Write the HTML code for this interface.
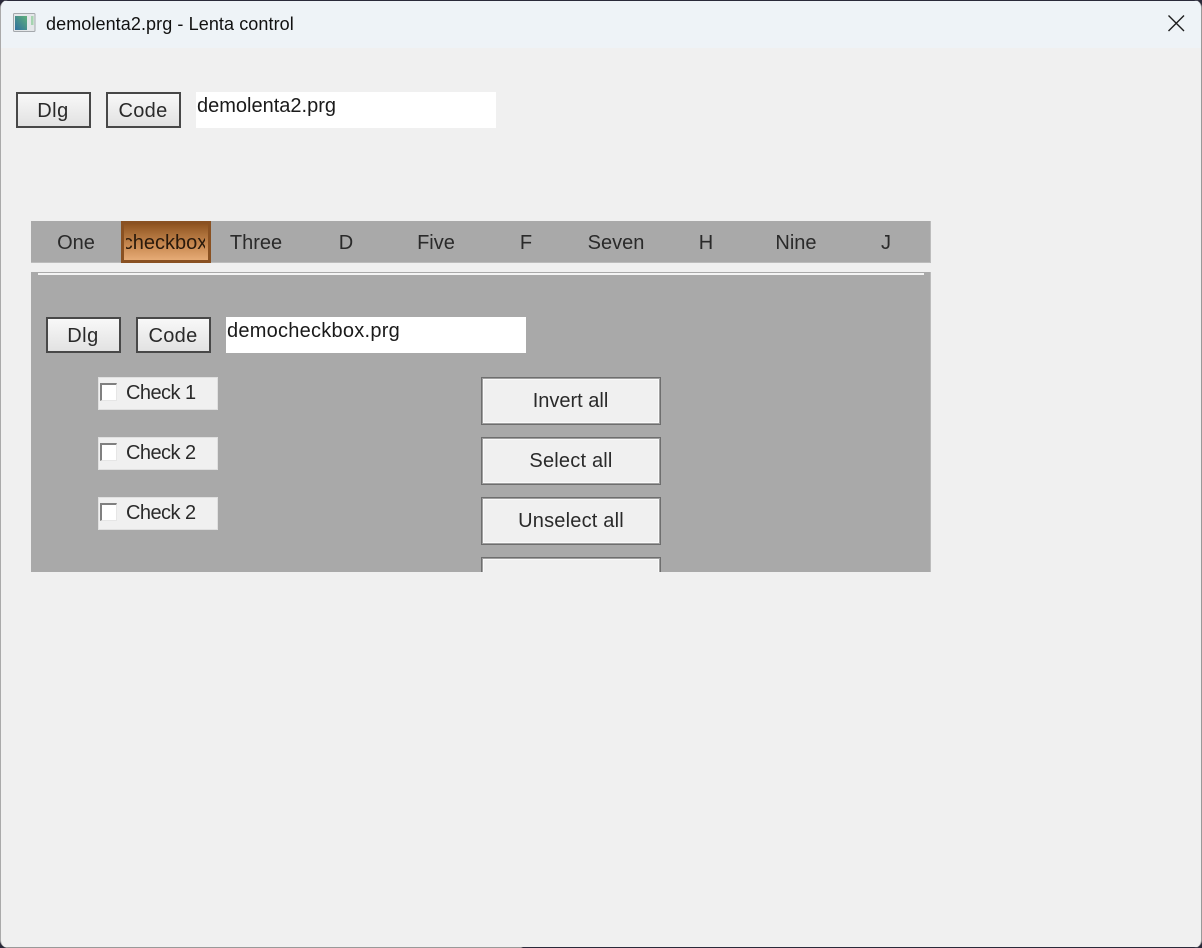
<!DOCTYPE html>
<html>
<head>
<meta charset="utf-8">
<title>demolenta2.prg - Lenta control</title>
<style>
html,body{margin:0;padding:0;width:1202px;height:948px;overflow:hidden;background:#2a2a3a;}
*{box-sizing:border-box;}
#win{position:absolute;left:0;top:0;width:1202px;height:948px;background:#f0f0f0;border-radius:8px;overflow:hidden;border-left:1px solid #aaa;border-right:1px solid #999;}
.a{position:absolute;white-space:nowrap;font-family:"Liberation Sans",sans-serif;font-size:20px;color:#1a1a1a;}
#bar{position:absolute;left:0;top:0;width:1202px;height:48px;background:#eef3f7;border-top:1px solid #2a2a3a;}
#bottom{position:absolute;left:0;top:947px;width:1202px;height:1px;background:linear-gradient(90deg,#999 0,#999 520px,#2a2a3a 522px,#2a2a3a 100%);}
.btn{position:absolute;border:2px solid #484848;background:linear-gradient(#f8f8f8,#e2e2e2);text-align:center;font-family:"Liberation Sans",sans-serif;font-size:20px;color:#2a2a2a;line-height:34px;}
.edit{position:absolute;background:#fff;font-family:"Liberation Sans",sans-serif;font-size:20px;color:#1a1a1a;line-height:28px;padding-left:1px;white-space:nowrap;}
.tab{position:absolute;top:221px;height:42px;width:90px;text-align:center;font-family:"Liberation Sans",sans-serif;font-size:20px;color:#2a2a2a;line-height:44px;}
.chk{position:absolute;left:97px;width:120px;height:33px;background:#f0f0f0;border:1px solid #e0e0e0;}
.box{position:absolute;left:1px;top:5px;width:17px;height:18px;background:#fff;border-top:2px solid #808080;border-left:2px solid #808080;border-right:1px solid #e6e6e6;border-bottom:1px solid #e6e6e6;}
.lbl{position:absolute;left:27px;top:3px;font-family:"Liberation Sans",sans-serif;font-size:20px;color:#2a2a2a;line-height:24px;white-space:nowrap;letter-spacing:-0.55px;}
.big{position:absolute;left:480px;width:180px;height:48px;background:#f0f0f0;border:1px solid #6e6e6e;box-shadow:inset 0 0 0 1px #a0a0a0,inset 0 0 0 2px #fafafa;text-align:center;font-family:"Liberation Sans",sans-serif;font-size:20px;color:#2a2a2a;line-height:46px;}
</style>
</head>
<body>
<div id="win">
  <div id="bar"></div>
  <svg style="position:absolute;left:12px;top:13px" width="23" height="20" viewBox="0 0 23 20">
    <defs><linearGradient id="g" x1="0" y1="1" x2="1" y2="0"><stop offset="0" stop-color="#2f6f9f"/><stop offset="1" stop-color="#5fb07a"/></linearGradient></defs>
    <rect x="0.5" y="0.5" width="21.5" height="18" rx="1" fill="#e4e7e9" stroke="#a4a8ac"/>
    <rect x="2" y="3" width="12" height="14" fill="url(#g)"/>
    <rect x="18" y="3" width="2.5" height="9" fill="#a5d4b0"/>
  </svg>
  <div class="a" style="left:45px;top:13px;font-size:18px;line-height:22px;color:#111;letter-spacing:0.09px;">demolenta2.prg - Lenta control</div>
  <svg style="position:absolute;left:1166px;top:14px" width="18" height="18" viewBox="0 0 18 18">
    <path d="M1.5 1.5L17 17M17 1.5L1.5 17" stroke="#1c1c1c" stroke-width="1.4" fill="none"/>
  </svg>

  <div class="btn" style="left:15px;top:92px;width:75px;height:36px;letter-spacing:0.5px;padding-right:1px;">Dlg</div>
  <div class="btn" style="left:105px;top:92px;width:75px;height:36px;letter-spacing:0.3px;padding-right:1px;">Code</div>
  <div class="edit" style="left:195px;top:92px;width:300px;height:36px;">demolenta2.prg</div>

  <div style="position:absolute;left:30px;top:221px;width:900px;height:42px;background:#a9a9a9;border-right:1px solid #bcbcbc;border-bottom:1px solid #bcbcbc;"></div>
  <div class="tab" style="left:30px;">One</div>
  <div style="position:absolute;left:120px;top:221px;width:90px;height:42px;background:linear-gradient(#8f5320,#a86c36 25%,#c98a52 60%,#e6ab76);border:3px solid #8a5122;overflow:hidden;">
    <div style="position:absolute;left:2px;top:-3px;width:79px;height:42px;overflow:hidden;">
      <div style="position:absolute;left:-61px;top:0;width:200px;line-height:44px;text-align:center;font-family:'Liberation Sans',sans-serif;font-size:20px;color:#2a1a0c;white-space:nowrap;">checkbox</div>
    </div>
  </div>
  <div class="tab" style="left:210px;">Three</div>
  <div class="tab" style="left:300px;">D</div>
  <div class="tab" style="left:390px;">Five</div>
  <div class="tab" style="left:480px;">F</div>
  <div class="tab" style="left:570px;">Seven</div>
  <div class="tab" style="left:660px;">H</div>
  <div class="tab" style="left:750px;">Nine</div>
  <div class="tab" style="left:840px;">J</div>

  <div style="position:absolute;left:30px;top:272px;width:900px;height:300px;background:#a9a9a9;overflow:hidden;">
    <div style="position:absolute;left:7px;top:1px;width:886px;height:2px;background:#f4f4f4;"></div>
    <div style="position:absolute;right:0;top:0;width:1px;height:300px;background:#bcbcbc;"></div>
  </div>
  <div class="btn" style="left:45px;top:317px;width:75px;height:36px;letter-spacing:0.5px;padding-right:1px;">Dlg</div>
  <div class="btn" style="left:135px;top:317px;width:75px;height:36px;letter-spacing:0.3px;padding-right:1px;">Code</div>
  <div class="edit" style="left:225px;top:317px;width:300px;height:36px;letter-spacing:0.25px;">democheckbox.prg</div>

  <div class="chk" style="top:377px;"><div class="box"></div><div class="lbl">Check 1</div></div>
  <div class="chk" style="top:437px;"><div class="box"></div><div class="lbl">Check 2</div></div>
  <div class="chk" style="top:497px;"><div class="box"></div><div class="lbl">Check 2</div></div>

  <div class="big" style="top:377px;padding-right:1px;">Invert all</div>
  <div class="big" style="top:437px;letter-spacing:0.2px;">Select all</div>
  <div class="big" style="top:497px;letter-spacing:0.2px;">Unselect all</div>
  <div style="position:absolute;left:480px;top:557px;width:180px;height:15px;overflow:hidden;">
    <div style="width:180px;height:48px;background:#f0f0f0;border:1px solid #6e6e6e;box-shadow:inset 0 0 0 1px #a0a0a0,inset 0 0 0 2px #fafafa;"></div>
  </div>
  <div id="bottom"></div>
</div>
</body>
</html>
